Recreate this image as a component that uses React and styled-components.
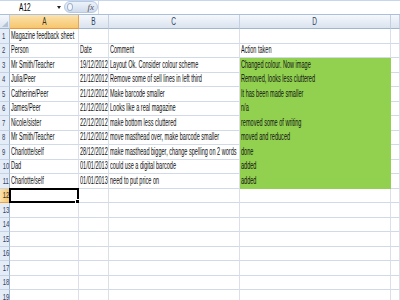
import React from 'react';
import styled, { createGlobalStyle } from 'styled-components';

const Global = createGlobalStyle`
  html, body { margin: 0; padding: 0; background: #fff; overflow: hidden; }
  body { font-family: "Liberation Sans", Arial, sans-serif; }
`;

const Window = styled.div`
  width: 400px;
  height: 300px;
  overflow: hidden;
  display: flex;
  flex-direction: column;
  background: #fff;
`;

const FormulaBar = styled.div`
  display: flex;
  height: 16px;
  box-sizing: border-box;
  border-top: 1px solid #c6d6ec;
  border-bottom: 1px solid #a9bfdc;
  background: #fff;
`;

const NameBox = styled.div`
  width: 63px;
  display: flex;
  align-items: center;
  font-size: 10px;
  color: #000;
`;

const NameText = styled.div`
  flex: 1;
  text-align: center;
  padding-right: 8px;
`;

const Arrow = styled.div`
  width: 0;
  height: 0;
  border-left: 2px solid transparent;
  border-right: 2px solid transparent;
  border-top: 3px solid #222;
  margin-right: 2px;
`;

const FxPill = styled.div`
  width: 34px;
  margin: 0 0 1px 1px;
  border-radius: 7px;
  background: linear-gradient(#eef3fa, #cfdcee);
  border: 1px solid #b7c9e2;
  box-sizing: border-box;
  display: flex;
  align-items: center;
  justify-content: space-between;
  padding: 0 3px 0 2px;
`;

const Dot = styled.span`
  width: 4px;
  height: 6px;
  border-radius: 50%;
  border: 1px solid #9fb2cc;
  background: #f4f7fb;
`;

const Fx = styled.span`
  font-family: "Liberation Serif", serif;
  font-style: italic;
  font-size: 9px;
  color: #555;
`;

const Input = styled.div`
  flex: 1;
  background: #fff;
  border-left: 1px solid #d5e0ee;
`;

const Spacer = styled.div`
  height: 3px;
  background: #e6edf7;
`;

const Sheet = styled.div`
  display: grid;
  grid-template-columns: 10px 69px 30px 131px 151px 9px;
  grid-template-rows: 14px;
  grid-auto-rows: 14.5px;
`;

const ColHead = styled.div`
  box-sizing: border-box;
  display: flex;
  align-items: center;
  justify-content: center;
  font-size: 10px;
  color: ${p => (p.$active ? '#3b3320' : '#2f4260')};
  background: ${p =>
    p.$active
      ? 'linear-gradient(#fbe2ad, #f6c66d)'
      : 'linear-gradient(#f5f8fc, #dae3ef)'};
  border-right: 1px solid ${p => (p.$active ? '#e6a44f' : '#c3d0e2')};
  border-bottom: 1px solid ${p => (p.$active ? '#f29536' : '#9eb6ce')};
`;

const Corner = styled(ColHead)`
  position: relative;
  &::after {
    content: '';
    position: absolute;
    right: 1px;
    bottom: 1px;
    border-left: 6px solid transparent;
    border-bottom: 6px solid #b5c3d6;
  }
`;

const RowHead = styled.div`
  box-sizing: border-box;
  display: flex;
  align-items: center;
  padding-left: 1px;
  font-size: 9px;
  color: ${p => (p.$active ? '#3b3320' : '#2f4260')};
  background: ${p => (p.$active ? 'linear-gradient(90deg, #fbe2ad, #f6c66d)' : '#e4ecf7')};
  border-right: 1px solid ${p => (p.$active ? '#f29536' : '#9eb6ce')};
  border-bottom: 1px solid ${p => (p.$active ? '#e6a44f' : '#c5d3e4')};
`;

const Cell = styled.div`
  box-sizing: border-box;
  position: relative;
  display: flex;
  align-items: flex-end;
  padding: 0 0 1px 1px;
  font-size: 10px;
  line-height: 12px;
  color: #111;
  white-space: nowrap;
  background: ${p => (p.$green ? '#92d050' : '#fff')};
  border-right: 1px solid ${p => (p.$green ? '#92d050' : '#dadfe8')};
  border-bottom: 1px solid ${p => (p.$green ? '#92d050' : '#d3dae7')};
`;

const Txt = styled.span`
  display: inline-block;
  transform: scaleX(0.555);
  transform-origin: 0 50%;
`;

const HeadTxt = styled.span`
  display: inline-block;
  transform: scaleX(0.65);
`;

const Selection = styled.div`
  position: absolute;
  left: -1px;
  top: -1px;
  right: -1px;
  bottom: -1px;
  border: 2px solid #000;
  &::after {
    content: '';
    position: absolute;
    right: -4px;
    bottom: -4px;
    width: 4px;
    height: 4px;
    background: #000;
    border: 1px solid #fff;
  }
`;

const rows = [
  ['Magazine feedback sheet', '', '', ''],
  ['Person', 'Date', 'Comment', 'Action taken'],
  ['Mr Smith/Teacher', '19/12/2012', 'Layout Ok. Consider colour scheme', 'Changed colour. Now image'],
  ['Julia/Peer', '21/12/2012', 'Remove some of sell lines in left third', 'Removed, looks less cluttered'],
  ['Catherine/Peer', '21/12/2012', 'Make barcode smaller', 'It has been made smaller'],
  ['James/Peer', '21/12/2012', 'Looks like a real magazine', 'n/a'],
  ['Nicole/sister', '22/12/2012', 'make bottom less cluttered', 'removed some of writing'],
  ['Mr Smith/Teacher', '21/12/2012', 'move masthead over, make barcode smaller', 'moved and reduced'],
  ['Charlotte/self', '28/12/2012', 'make masthead bigger, change spelling on 2 words', 'done'],
  ['Dad', '01/01/2013', 'could use a digital barcode', 'added'],
  ['Charlotte/self', '01/01/2013', 'need to put price on', 'added'],
];

const cols = ['A', 'B', 'C', 'D', ''];

export default function App() {
  const all = Array.from({ length: 19 }, (_, i) => rows[i] || ['', '', '', '']);
  return (
    <Window>
      <Global />
      <FormulaBar>
        <NameBox>
          <NameText><HeadTxt>A12</HeadTxt></NameText>
          <Arrow />
        </NameBox>
        <FxPill>
          <Dot />
          <Fx>fx</Fx>
        </FxPill>
        <Input />
      </FormulaBar>
      <Spacer />
      <Sheet>
        <Corner />
        {cols.map((c, i) => (
          <ColHead key={i} $active={c === 'A'}>
            <HeadTxt>{c}</HeadTxt>
          </ColHead>
        ))}
        {all.map((r, i) => {
          const n = i + 1;
          const green = n >= 3 && n <= 11;
          return (
            <React.Fragment key={n}>
              <RowHead $active={n === 12}>
                <HeadTxt>{n}</HeadTxt>
              </RowHead>
              <Cell>
                <Txt>{r[0]}</Txt>
                {n === 12 && <Selection />}
              </Cell>
              <Cell><Txt>{r[1]}</Txt></Cell>
              <Cell><Txt>{r[2]}</Txt></Cell>
              <Cell $green={green}><Txt>{r[3]}</Txt></Cell>
              <Cell />
            </React.Fragment>
          );
        })}
      </Sheet>
    </Window>
  );
}
